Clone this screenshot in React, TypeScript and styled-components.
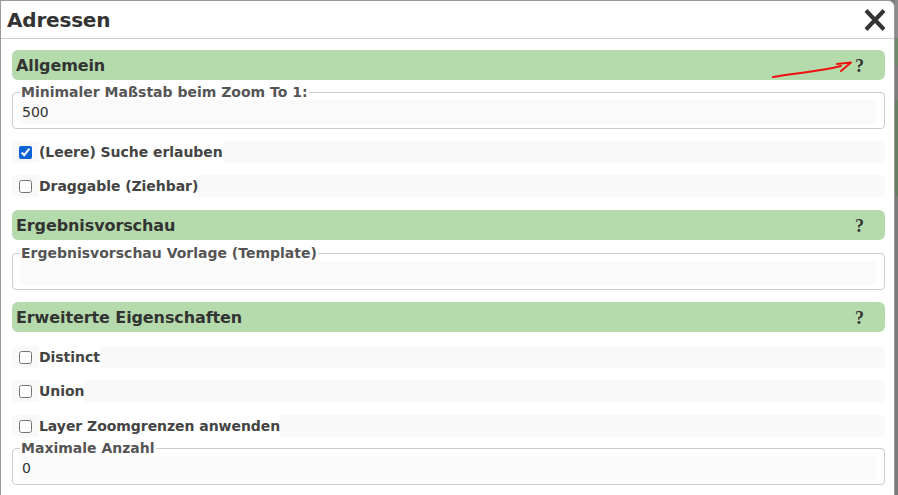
import React from "react";
import styled, { createGlobalStyle } from "styled-components";

const Global = createGlobalStyle`
  html, body { margin: 0; padding: 0; background: #7b7b7b; }
  body { font-family: "DejaVu Sans", Verdana, sans-serif; }
  * { box-sizing: border-box; }
`;

const Page = styled.div`
  display: flex;
  width: 898px;
  height: 495px;
  overflow: hidden;
`;

const Dialog = styled.div`
  flex: 0 0 895px;
  height: 510px;
  background: #fff;
  border: 1px solid #9a9a9a;
  border-radius: 0 7px 0 0;
  display: flex;
  flex-direction: column;
`;

const Backdrop = styled.div`
  flex: 1;
  display: flex;
  flex-direction: column;
  background: #7b7b7b;
`;

const Stripe = styled.div<{ $h: number; $c: string }>`
  flex: 0 0 ${(p) => p.$h}px;
  background: ${(p) => p.$c};
`;

const Header = styled.div`
  height: 38px;
  flex: 0 0 38px;
  display: flex;
  align-items: center;
  justify-content: space-between;
  padding: 0 7px 0 6px;
  border-bottom: 1px solid #cfcfcf;
`;

const Title = styled.h1`
  margin: 0;
  font-size: 20px;
  font-weight: bold;
  color: #333;
  letter-spacing: -0.2px;
`;

const CloseButton = styled.button`
  border: none;
  background: none;
  padding: 0;
  width: 24px;
  height: 24px;
  display: flex;
  align-items: center;
  justify-content: center;
  cursor: pointer;
`;

const Body = styled.div`
  display: flex;
  flex-direction: column;
  padding: 0 9px 0 11px;
`;

const Section = styled.div<{ $mt: number }>`
  position: relative;
  margin-top: ${(p) => p.$mt}px;
  height: 30px;
  background: #b5dbad;
  border-radius: 6px;
  display: flex;
  align-items: center;
  justify-content: space-between;
  padding: 0 21px 0 4px;
`;

const SectionTitle = styled.span`
  font-size: 16px;
  font-weight: bold;
  color: #333;
  letter-spacing: -0.1px;
`;

const Help = styled.span`
  font-family: "Liberation Serif", "Times New Roman", serif;
  font-size: 18px;
  font-weight: bold;
  color: #333;
  padding-top: 2px;
`;

const Annotation = styled.svg`
  position: absolute;
  left: 0;
  top: 0;
  width: 100%;
  height: 100%;
  overflow: visible;
  pointer-events: none;
`;

const Fieldset = styled.fieldset<{ $mt: number }>`
  margin: ${(p) => p.$mt}px 0 0 0;
  padding: 0 8px 4px 7px;
  border: 1px solid #cccccc;
  border-radius: 4px;
  min-width: 0;
`;

const Legend = styled.legend`
  font-size: 14px;
  font-weight: bold;
  color: #555;
  padding: 0 1px;
  margin-left: 0;
  line-height: 15px;
`;

const TextInput = styled.input`
  display: block;
  width: 100%;
  height: 24px;
  border: none;
  outline: none;
  background: #fafafa;
  padding: 0 2px;
  font-family: "DejaVu Sans", Verdana, sans-serif;
  font-size: 14px;
  color: #333;
`;

const Row = styled.label<{ $mt: number }>`
  margin-top: ${(p) => p.$mt}px;
  height: 22px;
  background: #f9f9f9;
  border-radius: 4px;
  display: flex;
  align-items: center;
  padding-left: 7px;
`;

const Check = styled.input`
  margin: 0 7px 0 0;
  width: 13px;
  height: 13px;
  accent-color: #0b62d6;
`;

const RowLabel = styled.span`
  font-size: 14px;
  font-weight: bold;
  color: #444;
  background: #fff;
  line-height: 22px;
  letter-spacing: -0.05px;
`;

const CloseIcon = () => (
  <svg width="24" height="22" viewBox="0 0 24 22">
    <path d="M3 1.5 L21 20.5 M21 1.5 L3 20.5" stroke="#333" strokeWidth="4" strokeLinecap="butt" />
  </svg>
);

export default function App() {
  return (
    <>
      <Global />
      <Page>
        <Dialog>
          <Header>
            <Title>Adressen</Title>
            <CloseButton aria-label="Schließen">
              <CloseIcon />
            </CloseButton>
          </Header>
          <Body>
            <Section $mt={11}>
              <SectionTitle>Allgemein</SectionTitle>
              <Help>?</Help>
              <Annotation viewBox="0 0 873 30" preserveAspectRatio="none">
                <path
                  d="M761 27 C 785 23, 810 21, 829 16"
                  stroke="#f01010"
                  strokeWidth="2"
                  fill="none"
                  strokeLinecap="round"
                />
                <path
                  d="M825 14 L839 12.5 L829 21"
                  stroke="#f01010"
                  strokeWidth="2"
                  fill="none"
                  strokeLinecap="round"
                  strokeLinejoin="round"
                />
              </Annotation>
            </Section>
            <Fieldset $mt={5}>
              <Legend>Minimaler Maßstab beim Zoom To 1:</Legend>
              <TextInput defaultValue="500" />
            </Fieldset>
            <Row $mt={12}>
              <Check type="checkbox" defaultChecked />
              <RowLabel>(Leere) Suche erlauben</RowLabel>
            </Row>
            <Row $mt={12}>
              <Check type="checkbox" />
              <RowLabel>Draggable (Ziehbar)</RowLabel>
            </Row>
            <Section $mt={13}>
              <SectionTitle>Ergebnisvorschau</SectionTitle>
              <Help>?</Help>
            </Section>
            <Fieldset $mt={6}>
              <Legend>Ergebnisvorschau Vorlage (Template)</Legend>
              <TextInput defaultValue="" />
            </Fieldset>
            <Section $mt={12}>
              <SectionTitle>Erweiterte Eigenschaften</SectionTitle>
              <Help>?</Help>
            </Section>
            <Row $mt={14}>
              <Check type="checkbox" />
              <RowLabel>Distinct</RowLabel>
            </Row>
            <Row $mt={12}>
              <Check type="checkbox" />
              <RowLabel>Union</RowLabel>
            </Row>
            <Row $mt={13}>
              <Check type="checkbox" />
              <RowLabel>Layer Zoomgrenzen anwenden</RowLabel>
            </Row>
            <Fieldset $mt={4}>
              <Legend>Maximale Anzahl</Legend>
              <TextInput defaultValue="0" />
            </Fieldset>
          </Body>
        </Dialog>
        <Backdrop>
          <Stripe $h={38} $c="#8c8c8c" />
          <Stripe $h={28} $c="#6f8a6a" />
          <Stripe $h={34} $c="#7d7d7d" />
          <Stripe $h={96} $c="#667e61" />
          <Stripe $h={303} $c="#7b7b7b" />
        </Backdrop>
      </Page>
    </>
  );
}
